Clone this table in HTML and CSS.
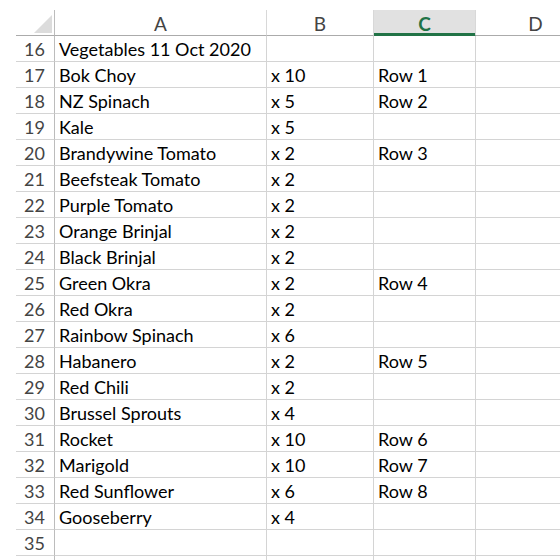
FILE: index.html
```html
<!DOCTYPE html>
<html>
<head>
<meta charset="utf-8">
<link rel="stylesheet" href="styles.css">
</head>
<body>
<div class="sheet">
  <div class="grid">
    <div class="corner"><span class="tri"></span></div>
    <div class="ch">A</div>
    <div class="ch">B</div>
    <div class="ch sel">C</div>
    <div class="ch last">D</div>

    <div class="rh">16</div><div class="c">Vegetables 11 Oct 2020</div><div class="c"></div><div class="c"></div><div class="c last"></div>
    <div class="rh">17</div><div class="c">Bok Choy</div><div class="c">x 10</div><div class="c">Row 1</div><div class="c last"></div>
    <div class="rh">18</div><div class="c">NZ Spinach</div><div class="c">x 5</div><div class="c">Row 2</div><div class="c last"></div>
    <div class="rh">19</div><div class="c">Kale</div><div class="c">x 5</div><div class="c"></div><div class="c last"></div>
    <div class="rh">20</div><div class="c">Brandywine Tomato</div><div class="c">x 2</div><div class="c">Row 3</div><div class="c last"></div>
    <div class="rh">21</div><div class="c">Beefsteak Tomato</div><div class="c">x 2</div><div class="c"></div><div class="c last"></div>
    <div class="rh">22</div><div class="c">Purple Tomato</div><div class="c">x 2</div><div class="c"></div><div class="c last"></div>
    <div class="rh">23</div><div class="c">Orange Brinjal</div><div class="c">x 2</div><div class="c"></div><div class="c last"></div>
    <div class="rh">24</div><div class="c">Black Brinjal</div><div class="c">x 2</div><div class="c"></div><div class="c last"></div>
    <div class="rh">25</div><div class="c">Green Okra</div><div class="c">x 2</div><div class="c">Row 4</div><div class="c last"></div>
    <div class="rh">26</div><div class="c">Red Okra</div><div class="c">x 2</div><div class="c"></div><div class="c last"></div>
    <div class="rh">27</div><div class="c">Rainbow Spinach</div><div class="c">x 6</div><div class="c"></div><div class="c last"></div>
    <div class="rh">28</div><div class="c">Habanero</div><div class="c">x 2</div><div class="c">Row 5</div><div class="c last"></div>
    <div class="rh">29</div><div class="c">Red Chili</div><div class="c">x 2</div><div class="c"></div><div class="c last"></div>
    <div class="rh">30</div><div class="c">Brussel Sprouts</div><div class="c">x 4</div><div class="c"></div><div class="c last"></div>
    <div class="rh">31</div><div class="c">Rocket</div><div class="c">x 10</div><div class="c">Row 6</div><div class="c last"></div>
    <div class="rh">32</div><div class="c">Marigold</div><div class="c">x 10</div><div class="c">Row 7</div><div class="c last"></div>
    <div class="rh">33</div><div class="c">Red Sunflower</div><div class="c">x 6</div><div class="c">Row 8</div><div class="c last"></div>
    <div class="rh">34</div><div class="c">Gooseberry</div><div class="c">x 4</div><div class="c"></div><div class="c last"></div>
    <div class="rh">35</div><div class="c"></div><div class="c"></div><div class="c"></div><div class="c last"></div>
    <div class="rh"></div><div class="c"></div><div class="c"></div><div class="c"></div><div class="c last"></div>
  </div>
</div>
</body>
</html>
```
FILE: styles.css
```css
html, body {
  margin: 0;
  padding: 0;
  background: #ffffff;
  overflow: hidden;
}
body {
  font-family: Lato, "Liberation Sans", sans-serif;
  font-size: 18px;
  color: #000;
}
.sheet {
  padding: 10px 0 0 16px;
  height: 550px;
  overflow: hidden;
}
.grid {
  display: grid;
  grid-template-columns: 39px 212px 107px 102px 120px;
  grid-auto-rows: 26px;
}
.grid > div {
  box-sizing: border-box;
  border-right: 1px solid #d4d4d4;
  border-bottom: 1px solid #d4d4d4;
  white-space: nowrap;
  overflow: visible;
  line-height: 25px;
  padding-top: 1px;
}
.corner {
  position: relative;
  border-right-color: #bcbcbc !important;
  border-bottom-color: #ababab !important;
}
.tri {
  position: absolute;
  right: 2px;
  bottom: 2px;
  width: 0;
  height: 0;
  border-left: 18px solid transparent;
  border-bottom: 18px solid #dcdcdc;
}
.ch {
  text-align: center;
  color: #444;
  font-size: 19px;
  border-right-color: #d8d8d8 !important;
  border-bottom-color: #ababab !important;
}
.ch.sel {
  background: #e1e1e1;
  color: #217346;
  font-weight: bold;
  border-bottom-color: #217346 !important;
  box-shadow: inset 0 -2px 0 #217346;
}
.rh {
  text-align: right;
  padding-right: 9px;
  color: #444;
  border-right-color: #bcbcbc !important;
}
.c {
  padding-left: 4px;
}
```
